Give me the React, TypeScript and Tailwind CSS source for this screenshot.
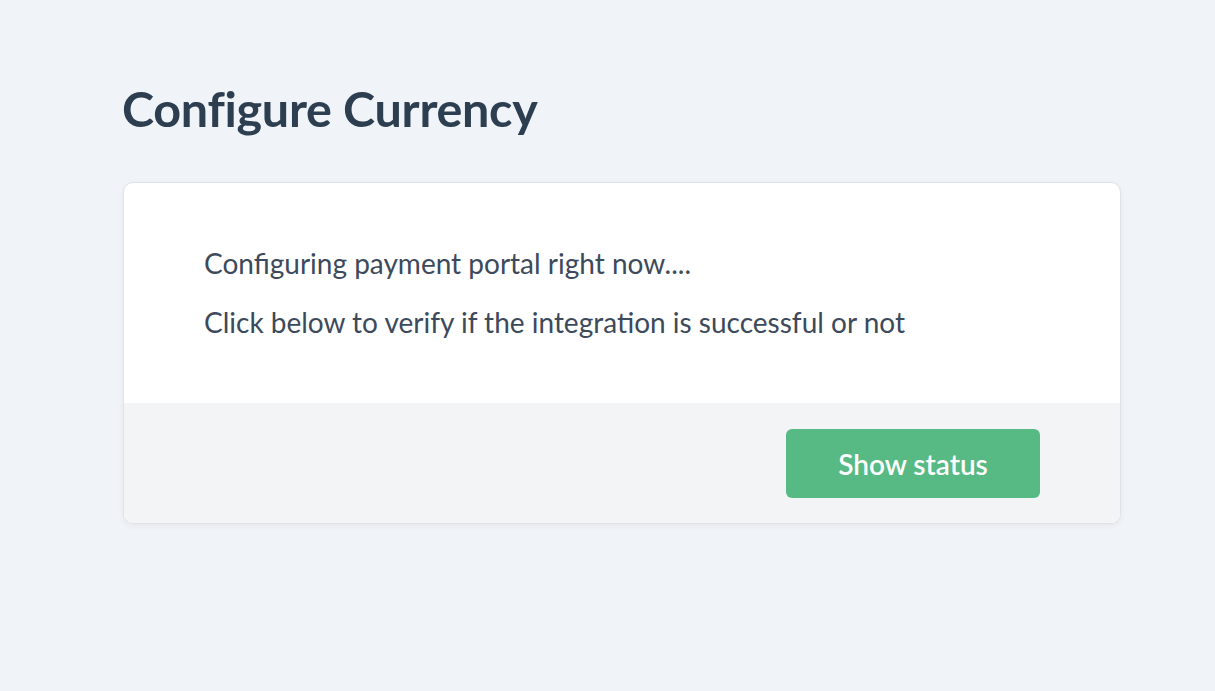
export default function App() {
  return (
    <div className="min-h-screen w-full bg-[#f0f4f8] pt-[72px] pl-[122px]" style={{ fontFamily: "Lato, 'Open Sans', sans-serif" }}>
      <h1 className="text-[48.5px] font-bold leading-[72px] text-[#2d3e50] tracking-[-0.3px]">Configure Currency</h1>
      <div className="ml-px mt-[38px] w-[998px] overflow-hidden rounded-[10px] border border-[#dde3e9] bg-white shadow-[0_2px_6px_rgba(0,0,0,0.05)]">
        <div className="flex h-[220px] flex-col pl-[80px] pt-[60px] text-[28px] leading-[40px] text-[#3c4a5b]">
          <p>Configuring payment portal right now....</p>
          <p className="mt-[19px]">Click below to verify if the integration is successful or not</p>
        </div>
        <div className="flex h-[120px] items-start justify-end bg-[#f3f4f6] pr-[80px] pt-[26px]">
          <button className="h-[69px] w-[254px] rounded-[6px] bg-[#57b983] text-[28px] font-semibold text-white">Show status</button>
        </div>
      </div>
    </div>
  );
}
